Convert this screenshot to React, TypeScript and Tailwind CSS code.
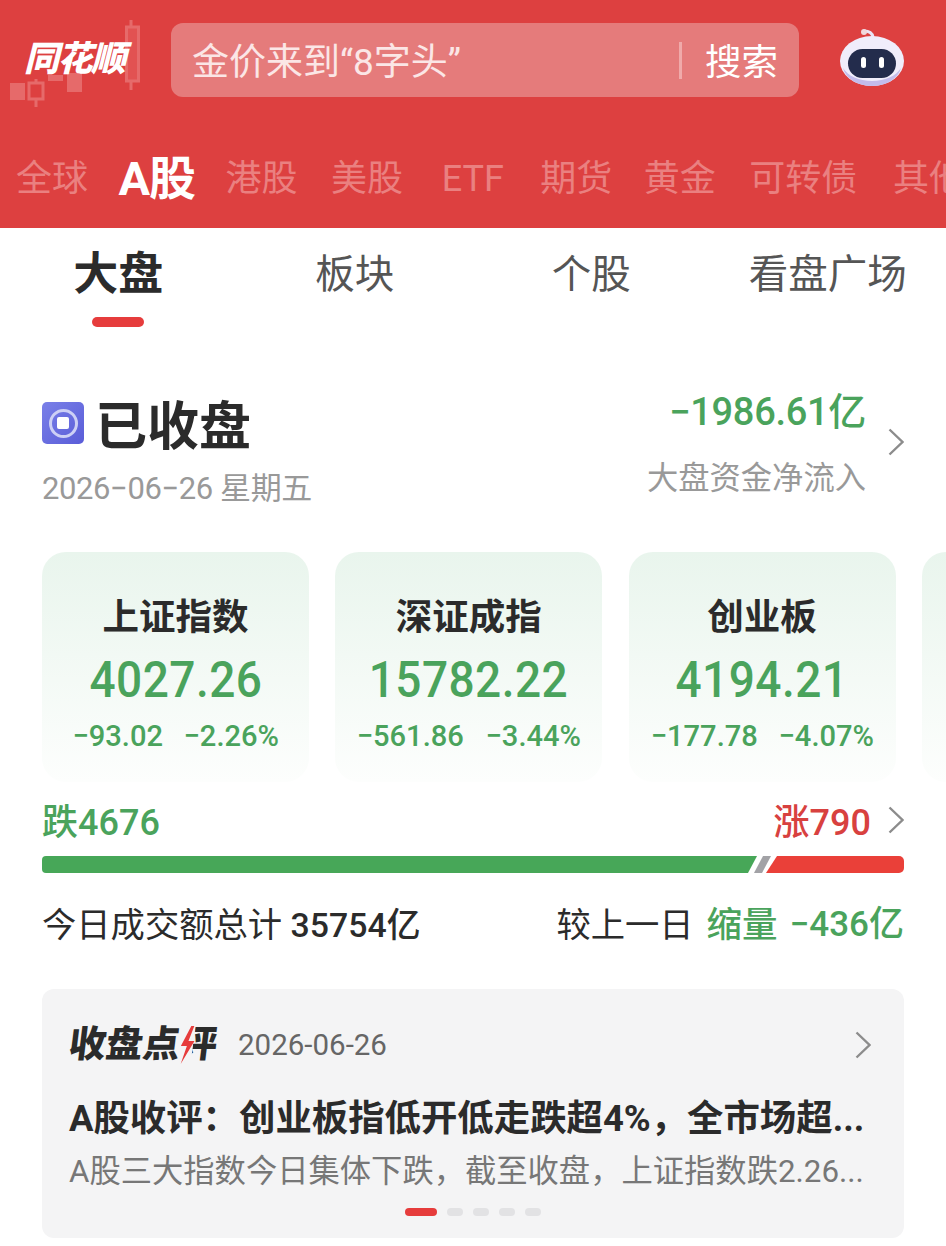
const cjk = "font-['Roboto','Noto_Sans_CJK_SC',sans-serif]"

const indexes = [
  { name: '上证指数', value: '4027.26', change: '−93.02', pct: '−2.26%' },
  { name: '深证成指', value: '15782.22', change: '−561.86', pct: '−3.44%' },
  { name: '创业板', value: '4194.21', change: '−177.78', pct: '−4.07%' },
]

function Chevron({ className = '' }: { className?: string }) {
  return (
    <svg className={`shrink-0 ${className}`} width="16" height="28" viewBox="0 0 16 28" fill="none">
      <path d="M1.5 1.5 14.5 14 1.5 26.5" stroke="#8c8c8c" strokeWidth="2.4" />
    </svg>
  )
}

function Logo() {
  return (
    <div className="relative h-[110px] w-[171px] shrink-0">
      {/* Candles behind the logo */}
      <svg className="absolute inset-0" width="147" height="110" viewBox="0 0 147 110" fill="none">
        <g stroke="#e66a6a" strokeWidth="3">
          <path d="M131 20v7M131 81v9" />
          <rect x="126.500" y="27" width="12" height="54" fill="#e25252" />
          <path d="M36 79v4M36 99v8" />
          <rect x="29" y="83" width="14" height="16" />
        </g>
        <g fill="#e66a6a">
          <rect x="10" y="83" width="15" height="17" />
          <rect x="67" y="73" width="15" height="19" />
          <rect x="48" y="75" width="15" height="6" />
        </g>
      </svg>
      <span className="absolute left-[24px] top-[39px] text-[35px] leading-[42px] font-black tracking-[-1.5px] whitespace-nowrap text-white italic">
        同花顺
      </span>
    </div>
  )
}

function Robot() {
  return (
    <svg width="66" height="60" viewBox="0 0 66 60" fill="none">
      <path d="M24 3c4 0 8 1 9 6" stroke="#e9e4f6" strokeWidth="3" strokeLinecap="round" />
      <circle cx="24" cy="4" r="3" fill="#f1d7dc" />
      <ellipse cx="32" cy="33" rx="32" ry="25" fill="#f0edfb" />
      <path d="M3 40c3 11 15 18 29 18s26-7 29-18c-5 8-16 13-29 13S8 48 3 40Z" fill="#c3bcec" />
      <rect x="8" y="21" width="48" height="29" rx="14.500" fill="#232c4c" />
      <rect x="21" y="29" width="5" height="11" rx="2.500" fill="#fff" />
      <rect x="39" y="29" width="5" height="11" rx="2.500" fill="#fff" />
    </svg>
  )
}

function IndexCard({ name, value, change, pct }: (typeof indexes)[number]) {
  return (
    <div className="flex h-[230px] w-[267px] shrink-0 flex-col items-center rounded-[24px] bg-gradient-to-b from-[#e9f5ed] to-[#fdfefd] pt-[44px]">
      <div className="text-[36.500px] leading-[44px] font-bold text-[#2b2b2b]">{name}</div>
      <div className="mt-[15px] inline-block scale-x-[0.92] text-[50px] leading-[50px] font-medium tracking-[0.5px] text-[#4aa35c]">
        {value}
      </div>
      <div className="mt-[13px] flex gap-[18px] text-[30px] leading-[36px] font-medium whitespace-nowrap text-[#4aa35c]">
        <span className="inline-block scale-x-[0.97]">{change}</span>
        <span className="inline-block scale-x-[0.97]">{pct}</span>
      </div>
    </div>
  )
}

export default function App() {
  return (
    <div className={`h-[1246px] w-[946px] overflow-hidden bg-white ${cjk}`}>
      {/* Red header */}
      <header className="h-[228px] overflow-hidden bg-[#dd4040]">
        <div className="flex h-[120px] items-start">
          <Logo />
          <div className="mt-[23px] flex h-[74px] w-[628px] items-center rounded-[12px] bg-[#e57b7b] pl-[21px]">
            <span className="flex-1 pt-[6px] text-[37px] leading-[42px] text-[#fbe6e6]">金价来到“8字头”</span>
            <span className="h-[37px] w-[3px] bg-[#f0aaaa]" />
            <span className="mr-[21px] ml-[23px] pt-[6px] text-[36.500px] leading-[42px] text-white">搜索</span>
          </div>
          <div className="mt-[28px] ml-[41px]">
            <Robot />
          </div>
        </div>
        <nav className="flex h-[108px] items-center gap-[33.500px] pt-[9px] pl-[16px] text-[36px] leading-[48px] whitespace-nowrap text-[#ea8080]">
          <span>全球</span>
          <span className="-mr-[3px] -ml-[3px] text-[47px] leading-[56px] font-bold tracking-[-1px] text-white">A股</span>
          <span>港股</span>
          <span>美股</span>
          <span className="mr-[3px] ml-[5px]">ETF</span>
          <span>期货</span>
          <span className="-ml-[2px]">黄金</span>
          <span>可转债</span>
          <span className="ml-[2px]">其他</span>
        </nav>
      </header>

      {/* Sub tabs */}
      <div className="grid h-[100px] w-[946px] grid-cols-[repeat(4,236.500px)] pt-[19px]">
        <div className="flex flex-col items-center">
          <span className="text-[45px] leading-[56px] font-bold text-[#2b2b2b]">大盘</span>
          <span className="mt-[14px] h-[10px] w-[52px] rounded-full bg-[#e63c3c]" />
        </div>
        {['板块', '个股', '看盘广场'].map((t) => (
          <div key={t} className="flex justify-center">
            <span className="text-[39.500px] leading-[56px] whitespace-nowrap text-[#555]">{t}</span>
          </div>
        ))}
      </div>

      <main className="px-[42px]">
        {/* Market status */}
        <section className="mt-[74px] flex justify-between">
          <div>
            <div className="flex items-start">
              <div className="flex h-[42px] w-[42px] items-center justify-center rounded-[5px] bg-gradient-to-br from-[#7a80e8] to-[#5a5cd8]">
                <div className="flex h-[29px] w-[29px] items-center justify-center rounded-full border-[3px] border-[#cdd0f5]">
                  <div className="h-[12px] w-[12px] rounded-[2px] bg-white" />
                </div>
              </div>
              <h1 className="-mt-[1px] ml-[11px] text-[52px] leading-[54px] font-bold text-[#2b2b2b]">已收盘</h1>
            </div>
            <div className="mt-[14px] text-[31px] leading-[40px] tracking-[-0.4px] text-[#999]">2026−06−26 星期五</div>
          </div>
          <div className="flex items-start">
            <div className="-mt-[12px] flex flex-col items-end">
              <div className="text-[38px] leading-[44px] font-medium tracking-[-0.3px] text-[#4aa35c]">−1986.61亿</div>
              <div className="mt-[25px] text-[31.300px] leading-[40px] text-[#999]">大盘资金净流入</div>
            </div>
            <Chevron className="mt-[26px] ml-[22px]" />
          </div>
        </section>

        {/* Index cards */}
        <section className="mt-[43px] flex w-[1000px] gap-[26.300px]">
          {indexes.map((i) => (
            <IndexCard key={i.name} {...i} />
          ))}
          <div className="h-[230px] w-[267px] shrink-0 rounded-[24px] bg-gradient-to-b from-[#e9f5ed] to-[#fdfefd]" />
        </section>

        {/* Rise and fall */}
        <div className="mt-[19px] flex h-[44px] items-center justify-between">
          <span className="text-[36px] leading-[44px] font-medium text-[#4aa35c]">跌4676</span>
          <div className="flex items-center">
            <span className="text-[36px] leading-[44px] font-medium text-[#d8413f]">涨790</span>
            <Chevron className="-mt-[7px] ml-[17px]" />
          </div>
        </div>
        <div className="mt-[11px] flex h-[17px] w-[862px]">
          <div className="h-full w-[715px] rounded-l-[4px] bg-[#47a758] [clip-path:polygon(0_0,100%_0,calc(100%-9px)_100%,0_100%)]" />
          <div className="-ml-[3px] h-full w-[17px] bg-[#a2a2a6] [clip-path:polygon(9px_0,100%_0,8px_100%,0_100%)]" />
          <div className="-ml-[5px] h-full w-[138px] rounded-r-[5px] bg-[#ea4039] [clip-path:polygon(11px_0,100%_0,100%_100%,0_100%)]" />
        </div>

        <div className="mt-[30px] flex h-[44px] items-center justify-between text-[34.300px] leading-[44px] text-[#2b2b2b]">
          <div>
            今日成交额总计 <span className="text-[33.800px] font-medium">35754亿</span>
          </div>
          <div className="flex items-center">
            <span>较上一日</span>
            <span className="ml-[13px] text-[35.500px] font-medium text-[#4aa35c]">缩量</span>
            <span className="ml-[12px] text-[35px] font-medium text-[#4aa35c]">−436亿</span>
          </div>
        </div>

        {/* Closing comment */}
        <section className="mt-[42px] h-[249px] rounded-[12px] bg-[#f4f4f5] px-[27px] pt-[33px]">
          <div className="flex items-center">
            <span className="inline-block -skew-x-[7deg] text-[37px] leading-[46px] font-black text-[#2b2b2b]">
              收盘点
              <span className="relative inline-block">
                评
                <svg className="absolute -top-[1px] left-0" width="16" height="46" viewBox="0 0 16 46">
                  <rect x="0" y="0" width="13" height="46" fill="#f4f4f5" />
                  <path d="M9 5 1 25h6L3 43l11-23H8l4-15Z" fill="#e63c3c" />
                </svg>
              </span>
            </span>
            <span className="ml-[21px] text-[29.500px] leading-[46px] text-[#666]">2026-06-26</span>
            <Chevron className="mr-[6px] ml-auto" />
          </div>
          <h2 className="mt-[29px] text-[36.400px] leading-[44px] font-bold whitespace-nowrap text-[#2b2b2b]">
            A股收评：创业板指低开低走跌超4%，全市场超...
          </h2>
          <p className="mt-[11px] text-[31.300px] leading-[40px] whitespace-nowrap text-[#777]">
            A股三大指数今日集体下跌，截至收盘，上证指数跌2.26...
          </p>
          <div className="mt-[16px] flex justify-center gap-[10px]">
            <span className="h-[8px] w-[32px] rounded-full bg-[#e63c3c]" />
            <span className="h-[8px] w-[16px] rounded-full bg-[#e2e2e4]" />
            <span className="h-[8px] w-[16px] rounded-full bg-[#e2e2e4]" />
            <span className="h-[8px] w-[16px] rounded-full bg-[#e2e2e4]" />
            <span className="h-[8px] w-[16px] rounded-full bg-[#e2e2e4]" />
          </div>
        </section>
      </main>
    </div>
  )
}
